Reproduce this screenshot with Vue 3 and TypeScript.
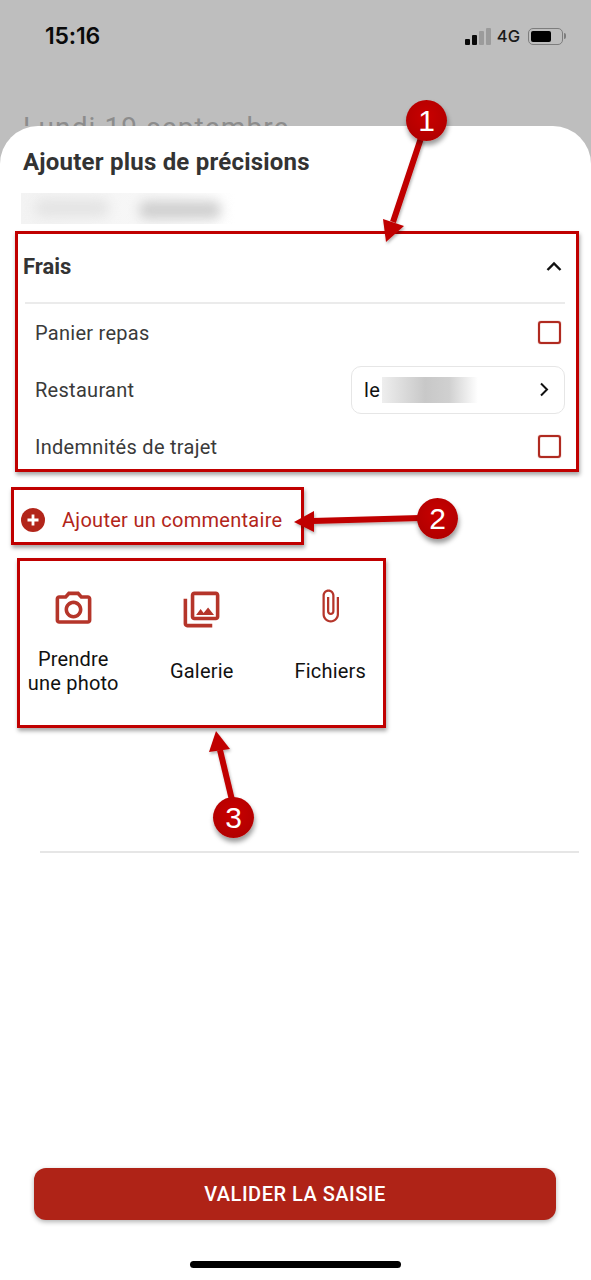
<script setup lang="ts">
const rows = [
  { label: 'Panier repas', kind: 'check' },
  { label: 'Restaurant', kind: 'select' },
  { label: 'Indemnités de trajet', kind: 'check' },
]
const bars = [
  { h: 6, on: true },
  { h: 10, on: true },
  { h: 14, on: false },
  { h: 17, on: false },
]
const attachments = [
  {
    label: 'Prendre une photo',
    d: 'M20 4h-3.17L15 2H9L7.17 4H4c-1.1 0-2 .9-2 2v12c0 1.1.9 2 2 2h16c1.1 0 2-.9 2-2V6c0-1.1-.9-2-2-2zm0 14H4V6h4.05l1.83-2h4.24l1.83 2H20v12zM12 7c-2.76 0-5 2.24-5 5s2.24 5 5 5 5-2.24 5-5-2.24-5-5-5zm0 8c-1.65 0-3-1.35-3-3s1.35-3 3-3 3 1.35 3 3-1.35 3-3 3z',
    size: 43,
  },
  {
    label: 'Galerie',
    d: 'M20 4v12H8V4h12m0-2H8c-1.1 0-2 .9-2 2v12c0 1.1.9 2 2 2h12c1.1 0 2-.9 2-2V4c0-1.1-.9-2-2-2zm-8.5 9.67l1.69 2.26 2.48-3.1L19 15H9zM2 6v14c0 1.1.9 2 2 2h14v-2H4V6H2z',
    size: 43,
  },
  {
    label: 'Fichiers',
    d: 'M16.5 6v11.5c0 2.21-1.79 4-4 4s-4-1.79-4-4V5c0-1.38 1.12-2.5 2.5-2.5s2.5 1.12 2.5 2.5v10.5c0 .55-.45 1-1 1s-1-.45-1-1V6H10v9.5c0 1.38 1.12 2.5 2.5 2.5s2.5-1.12 2.5-2.5V5c0-2.21-1.79-4-4-4S7 2.79 7 5v12.5c0 3.04 2.46 5.5 5.5 5.5s5.5-2.46 5.5-5.5V6h-1.5z',
    size: 36,
  },
]
</script>

<template>
  <div class="page">
    <header class="backdrop">
      <div class="status">
        <span class="time">15:16</span>
        <div class="status-right">
          <div class="signal">
            <i v-for="(b, i) in bars" :key="i" :class="{ on: b.on }" :style="{ height: b.h + 'px' }"></i>
          </div>
          <span class="net">4G</span>
          <div class="battery"><i></i></div>
          <div class="battery-cap"></div>
        </div>
      </div>
      <div class="date">Lundi 19 septembre</div>
    </header>

    <main class="sheet">
      <h1 class="title">Ajouter plus de précisions</h1>
      <div class="name-blur"><i class="blob a"></i><i class="blob b"></i></div>

      <section class="frais">
        <div class="frais-head">
          <span>Frais</span>
          <svg class="chev-up" width="16" height="11" viewBox="0 0 16 11"><path d="M1.5 9 8 2.5 14.5 9" fill="none" stroke="#111" stroke-width="2.4" /></svg>
        </div>
        <div v-for="r in rows" :key="r.label" class="row">
          <span>{{ r.label }}</span>
          <i v-if="r.kind === 'check'" class="check"></i>
          <div v-else class="select">
            <span class="le">le</span>
            <i class="select-blur"></i>
            <svg width="11" height="15" viewBox="0 0 11 15"><path d="M2 1.5 8 7.5 2 13.5" fill="none" stroke="#111" stroke-width="2" /></svg>
          </div>
        </div>
      </section>

      <div class="comment">
        <svg width="24" height="24" viewBox="0 0 24 24">
          <circle cx="12" cy="12" r="12" fill="#b2251a" />
          <path d="M12 6.5v11M6.5 12h11" stroke="#fff" stroke-width="2.8" />
        </svg>
        <span>Ajouter un commentaire</span>
      </div>

      <div class="attachments">
        <div v-for="a in attachments" :key="a.label" class="attachment">
          <div class="icon-slot">
            <svg :width="a.size" :height="a.size" viewBox="0 0 24 24"><path :d="a.d" fill="#b5352a" /></svg>
          </div>
          <div class="attachment-label"><span>{{ a.label }}</span></div>
        </div>
      </div>

      <div class="divider"></div>
      <div class="spacer"></div>
      <button class="submit" type="button">VALIDER LA SAISIE</button>
      <div class="home"></div>
    </main>

    <!-- Annotations posées sur la capture -->
    <div class="box box1"></div>
    <div class="box box2"></div>
    <div class="box box3"></div>
    <svg class="arrows" width="591" height="1280" viewBox="0 0 591 1280">
      <defs>
        <filter id="arrow-shadow" x="-30%" y="-30%" width="160%" height="160%">
          <feDropShadow dx="1" dy="2" stdDeviation="1.5" flood-color="#000" flood-opacity=".3" />
        </filter>
      </defs>
      <g fill="#c00000" stroke="#c00000" filter="url(#arrow-shadow)">
        <path d="M421 138 393 222" stroke-width="6" fill="none" />
        <path d="M386 242 383 219 404 226Z" stroke="none" />
        <path d="M420 518 312 521" stroke-width="6" fill="none" />
        <path d="M294 522 314 511 314 532Z" stroke="none" />
        <path d="M232 800 220 750" stroke-width="6" fill="none" />
        <path d="M216 731 209 752 230 749Z" stroke="none" />
      </g>
    </svg>
    <div class="badge b1">1</div>
    <div class="badge b2">2</div>
    <div class="badge b3">3</div>
  </div>
</template>

<style>
html, body { margin: 0; background: #fff; }
</style>

<style scoped>
.page {
  position: relative;
  width: 591px;
  height: 1280px;
  overflow: hidden;
  display: flex;
  flex-direction: column;
  background: #bebebe;
  font-family: Roboto, "Liberation Sans", sans-serif;
}
.backdrop {
  height: 126px;
  flex: none;
  overflow: hidden;
}
.status {
  height: 72px;
  display: flex;
  justify-content: space-between;
  align-items: center;
  padding: 0 25px 0 45px;
}
.time {
  font: 600 23px Inter, sans-serif;
  color: #0a0a0a;
  letter-spacing: -0.2px;
}
.status-right { display: flex; align-items: center; }
.signal { display: flex; align-items: flex-end; gap: 2px; height: 17px; }
.signal i { width: 5px; background: #9b9b9b; border-radius: 1px; }
.signal i.on { background: #0a0a0a; }
.net { font: 500 16.5px Inter, sans-serif; color: #1a1a1a; margin: 0 8px 0 6px; }
.battery {
  box-sizing: border-box;
  width: 35px;
  height: 17px;
  border: 1.5px solid #7d7d7d;
  border-radius: 5px;
  padding: 2px;
}
.battery i { display: block; width: 20px; height: 100%; background: #000; border-radius: 2px; }
.battery-cap { width: 2px; height: 6px; background: #7d7d7d; margin-left: 1px; border-radius: 0 2px 2px 0; }
.date {
  padding: 40px 0 0 23px;
  font-size: 28px;
  line-height: 32px;
  color: #8c8c8c;
  letter-spacing: 1.1px;
}
.sheet {
  flex: 1;
  display: flex;
  flex-direction: column;
  background: #fff;
  border-radius: 38px 38px 0 0;
  min-height: 0;
}
.title {
  margin: 20px 0 0 23px;
  font-size: 24px;
  line-height: 32px;
  font-weight: 700;
  color: #333;
  letter-spacing: 0.22px;
}
.name-blur {
  position: relative;
  overflow: hidden;
  height: 31px;
  width: 215px;
  margin: 15px 0 0 21px;
  background: linear-gradient(90deg, #f3f3f3, #f7f7f7 55%, #fff);
}
.blob { position: absolute; display: block; filter: blur(6px); border-radius: 8px; }
.blob.a { left: 14px; width: 74px; top: 6px; height: 18px; background: #e4e4e4; }
.blob.b { left: 118px; width: 82px; top: 8px; height: 18px; background: #cfcfcf; }
.frais { margin-top: 7px; }
.frais-head {
  box-sizing: border-box;
  height: 73px;
  margin: 0 26px 0 25px;
  border-bottom: 2px solid #ebebeb;
  display: flex;
  justify-content: space-between;
  align-items: center;
  font-size: 22px;
  font-weight: 700;
  color: #333;
}
.frais-head span { margin-left: -2px; }
.chev-up { margin-right: 3px; }
.row {
  height: 57px;
  display: flex;
  justify-content: space-between;
  align-items: center;
  margin: 0 26px 0 35px;
  font-size: 20px;
  letter-spacing: 0.28px;
  color: #3a3a3a;
}
.check {
  box-sizing: border-box;
  width: 23px;
  height: 23px;
  margin-right: 4px;
  border: 2px solid #b02a20;
  border-radius: 3px;
  box-shadow: 0 0 1px #b02a20, inset 0 0 1px #b02a20;
}
.select {
  box-sizing: border-box;
  width: 214px;
  height: 48px;
  padding: 0 14px 0 12px;
  display: flex;
  align-items: center;
  border: 1px solid #e6e6e6;
  border-radius: 10px;
  background: #fff;
}
.le { color: #111; }
.select-blur {
  display: block;
  height: 26px;
  width: 96px;
  margin-left: 2px;
  margin-right: auto;
  background: linear-gradient(90deg, #eee, #c8c8c8 45%, #d0d0d0 70%, #fff);
}
.comment {
  height: 50px;
  margin: 20px 0 0 21px;
  display: flex;
  align-items: center;
  gap: 17px;
  font-size: 20px;
  letter-spacing: 0.28px;
  color: #b2251a;
}
.attachments {
  display: grid;
  grid-template-columns: repeat(3, 128.5px);
  margin: 43px 0 0 9px;
}
.attachment { display: flex; flex-direction: column; align-items: center; }
.icon-slot { height: 59px; display: flex; justify-content: center; align-items: flex-start; }
.attachment-label {
  height: 48px;
  width: 100px;
  display: flex;
  align-items: center;
  justify-content: center;
  text-align: center;
  font-size: 20px;
  line-height: 24px;
  letter-spacing: 0.2px;
  color: #111;
}
.divider { height: 2px; margin: 156px 12px 0 40px; background: #e6e6e6; }
.spacer { flex: 1; }
.submit {
  height: 52px;
  margin: 0 35px 0 34px;
  border: 0;
  border-radius: 12px;
  background: #af2317;
  color: #fff;
  font: 500 20px Roboto, sans-serif;
  letter-spacing: 0.5px;
  box-shadow: 0 2px 5px rgba(0, 0, 0, .3);
}
.home {
  width: 211px;
  height: 7px;
  margin: 41px 0 12px 190px;
  background: #000;
  border-radius: 4px;
}
.box {
  position: absolute;
  box-sizing: border-box;
  border: 3px solid #c00000;
  box-shadow: 1px 3px 4px rgba(0, 0, 0, .35);
}
.box1 { left: 15px; top: 231px; width: 564px; height: 241px; }
.box2 { left: 11px; top: 487px; width: 293px; height: 58px; }
.box3 { left: 17px; top: 558px; width: 369px; height: 170px; }
.arrows { position: absolute; left: 0; top: 0; pointer-events: none; }
.badge {
  position: absolute;
  width: 41px;
  height: 41px;
  border-radius: 50%;
  background: radial-gradient(circle at 50% 40%, #c90000, #aa0000);
  color: #fff;
  font: 400 30px/41px "Liberation Sans", sans-serif;
  text-align: center;
  box-shadow: 1px 4px 5px rgba(0, 0, 0, .4);
}
.b1 { left: 406px; top: 100px; }
.b2 { left: 417px; top: 498px; }
.b3 { left: 213px; top: 797px; }
</style>
